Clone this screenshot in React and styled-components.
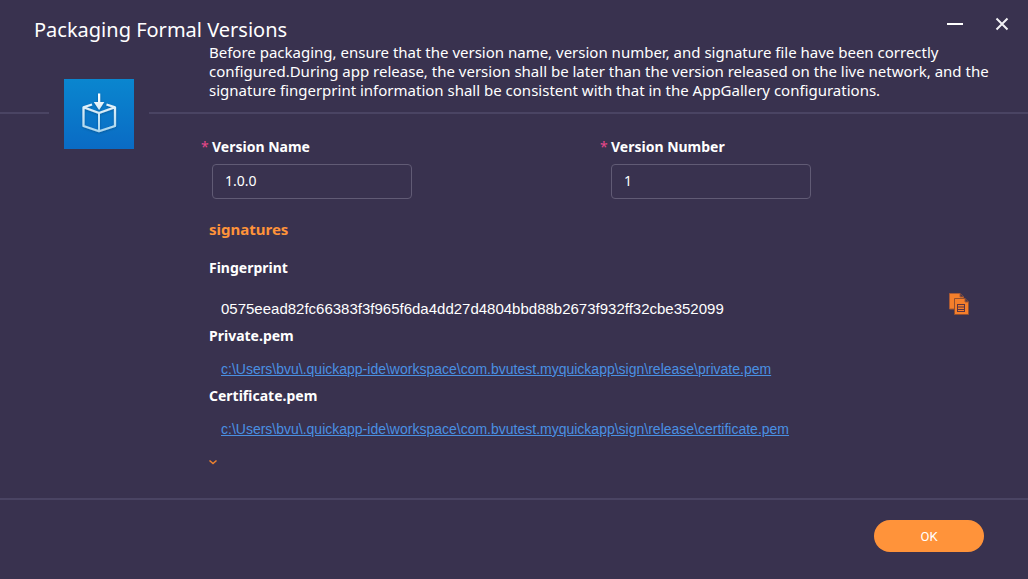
import React from "react";
import styled, { createGlobalStyle } from "styled-components";

const GlobalStyle = createGlobalStyle`
  * { box-sizing: border-box; }
  body {
    margin: 0;
    background: #39324f;
    color: #fff;
    font-family: "Noto Sans", "Open Sans", sans-serif;
    font-size: 14px;
  }
`;

const Dialog = styled.main`
  display: flex;
  flex-direction: column;
  min-height: 100vh;
`;

const Header = styled.header`
  display: flex;
  justify-content: space-between;
  height: 43px;
  padding: 14px 16px 0 34px;
`;

const Title = styled.h1`
  margin: 0;
  font-size: 20px;
  line-height: 32px;
  font-weight: 400;
  white-space: nowrap;
`;

const WindowControls = styled.div`
  display: flex;
  gap: 27px;
`;

const IconButton = styled.button`
  display: block;
  width: ${({ $width }) => $width}px;
  height: ${({ $height }) => $height}px;
  padding: 0;
  border: 0;
  background: none;
  cursor: pointer;

  svg { display: block; }
`;

const Body = styled.div`
  display: grid;
  grid-template-columns: 49px 100px minmax(0, 1fr);
  flex: 1;
`;

const Rule = styled.hr`
  height: 2px;
  margin: ${({ $top }) => $top}px 0 0;
  border: 0;
  background: #4a4463;
`;

const AppIcon = styled.div`
  justify-self: center;
  width: 70px;
  height: 70px;
  margin-top: 36px;
  background: linear-gradient(#0a86cf, #0a6bc4);

  svg { display: block; }
`;

const Description = styled.p`
  margin: 0;
  padding: 0 16px 0 60px;
  font-size: 15px;
  line-height: 19px;
`;

const Form = styled.form`
  padding: 22px 59px 0 60px;
`;

const Fields = styled.div`
  display: grid;
  grid-template-columns: 399px 200px;
  padding-left: 3px;
`;

const Field = styled.div`
  display: flex;
  flex-direction: column;
  gap: 6px;
`;

const Label = styled.label`
  margin-left: -11px;
  font-size: 14px;
  line-height: 22px;
  font-weight: 700;
`;

const Required = styled.span`
  display: inline-block;
  width: 11px;
  color: #e8488b;
  font-weight: 400;
`;

const TextInput = styled.input`
  width: 200px;
  height: 35px;
  padding: 0 12px 2px;
  border: 1px solid #615b75;
  border-radius: 4px;
  background: transparent;
  color: #fff;
  font: 14px "Noto Sans", "Open Sans", sans-serif;
`;

const SectionTitle = styled.h2`
  margin: 19px 0 0;
  color: #ff933a;
  font-size: 15px;
  line-height: 22px;
`;

const ItemTitle = styled.h3`
  margin: ${({ $top }) => $top}px 0 0;
  font-size: 14px;
  line-height: 22px;
`;

const ItemValue = styled.div`
  margin-top: 12px;
  padding-left: 12px;
  font: 14px/20px "Liberation Sans", Arial, sans-serif;
`;

const FingerprintRow = styled.div`
  display: flex;
  justify-content: space-between;
  margin-top: 14px;
  padding-left: 12px;
  font: 15px/32px "Liberation Sans", Arial, sans-serif;
`;

const FileLink = styled.a`
  color: #4a90e2;
`;

const ExpandButton = styled(IconButton)`
  margin-top: 19px;
`;

const Footer = styled.footer`
  display: flex;
  justify-content: flex-end;
  height: 81px;
  padding: 20px 44px 0 0;
  border-top: 2px solid #4a4463;
`;

const OkButton = styled.button`
  width: 110px;
  height: 32px;
  padding: 0;
  border: 0;
  border-radius: 16px;
  background: #ff933a;
  color: #fff;
  font: 13px Roboto, sans-serif;
  cursor: pointer;
`;

const PackageIcon = () => (
  <svg width="70" height="70" viewBox="0 0 70 70" fill="none" aria-hidden="true">
    <defs>
      <linearGradient id="box" x1="0" y1="14" x2="0" y2="54" gradientUnits="userSpaceOnUse">
        <stop stopColor="#fff" />
        <stop offset="1" stopColor="#a5d4ee" />
      </linearGradient>
      <filter id="shade" x="0" y="0" width="70" height="70" filterUnits="userSpaceOnUse">
        <feDropShadow dx="0" dy="1" stdDeviation="1" floodColor="#04467f" floodOpacity="0.6" />
      </filter>
    </defs>
    <g filter="url(#shade)" stroke="url(#box)" strokeWidth="2.2" strokeLinejoin="round">
      <path d="M28 25.500 19.500 28.300V47L35 52.200 51 47V28.300L42.500 25.500M19.500 28.300 35 34 51 28.300" />
      <path d="M34 34h2v18h-2z" fill="url(#box)" stroke="none" />
      <path d="M34 14.500h2.200V23H40.300L35.100 31 29.800 23h4.200z" fill="url(#box)" stroke="none" />
    </g>
  </svg>
);

const CopyIcon = () => (
  <svg width="20" height="22" viewBox="0 0 20 22" aria-hidden="true">
    <path d="M.5.500H11L14.500 4V16H.5z" fill="#f57f2b" stroke="#a95a35" />
    <path d="M11 .5V4h3.500" fill="#39324f" stroke="#a95a35" />
    <path d="M5.500 5.500H16L19.500 9V21.500H5.500z" fill="#f57f2b" stroke="#94502f" />
    <path d="M16 5.500V9h3.500" fill="#39324f" stroke="#a95a35" />
    <path d="M8 11.500h8M9 14h6M9 16.500h6M8 18.500h8M8.500 11v8M15.500 11v8" stroke="#5b3443" />
  </svg>
);

function RequiredField({ id, label, value }) {
  return (
    <Field>
      <Label htmlFor={id}><Required>*</Required>{label}</Label>
      <TextInput id={id} defaultValue={value} required />
    </Field>
  );
}

const signFolder = "c:\\Users\\bvu\\.quickapp-ide\\workspace\\com.bvutest.myquickapp\\sign\\release\\";

export default function App() {
  return (
    <Dialog>
      <GlobalStyle />
      <Header>
        <Title>Packaging Formal Versions</Title>
        <WindowControls>
          <IconButton type="button" $width={20} $height={20} aria-label="Minimize">
            <svg width="20" height="20"><path d="M2 10h16" stroke="#fff" strokeWidth="2" /></svg>
          </IconButton>
          <IconButton type="button" $width={20} $height={20} aria-label="Close">
            <svg width="20" height="20"><path d="m4.500 4.500 11 11m0-11-11 11" stroke="#f2f1f5" strokeWidth="2" /></svg>
          </IconButton>
        </WindowControls>
      </Header>
      <Body>
        <Rule $top={69} />
        <AppIcon><PackageIcon /></AppIcon>
        <div>
          <Description>
            Before packaging, ensure that the version name, version number, and signature file have been correctly
            configured.During app release, the version shall be later than the version released on the live network, and the
            signature fingerprint information shall be consistent with that in the AppGallery configurations.
          </Description>
          <Rule $top={12} />
          <Form onSubmit={(event) => event.preventDefault()} id="package-form">
            <Fields>
              <RequiredField id="version-name" label="Version Name" value="1.0.0" />
              <RequiredField id="version-number" label="Version Number" value="1" />
            </Fields>
            <SectionTitle>signatures</SectionTitle>
            <ItemTitle $top={17}>Fingerprint</ItemTitle>
            <FingerprintRow>
              <span>0575eead82fc66383f3f965f6da4dd27d4804bbd88b2673f932ff32cbe352099</span>
              <IconButton type="button" $width={20} $height={22} aria-label="Copy fingerprint"><CopyIcon /></IconButton>
            </FingerprintRow>
            <ItemTitle $top={0}>Private.pem</ItemTitle>
            <ItemValue><FileLink href="#private">{signFolder}private.pem</FileLink></ItemValue>
            <ItemTitle $top={6}>Certificate.pem</ItemTitle>
            <ItemValue><FileLink href="#certificate">{signFolder}certificate.pem</FileLink></ItemValue>
            <ExpandButton type="button" $width={8} $height={8} aria-label="Show more">
              <svg width="8" height="8" fill="none"><path d="m.5 2.500 3.500 3 3.500-3" stroke="#ee832f" strokeWidth="1.500" /></svg>
            </ExpandButton>
          </Form>
        </div>
      </Body>
      <Footer><OkButton type="submit" form="package-form">OK</OkButton></Footer>
    </Dialog>
  );
}
